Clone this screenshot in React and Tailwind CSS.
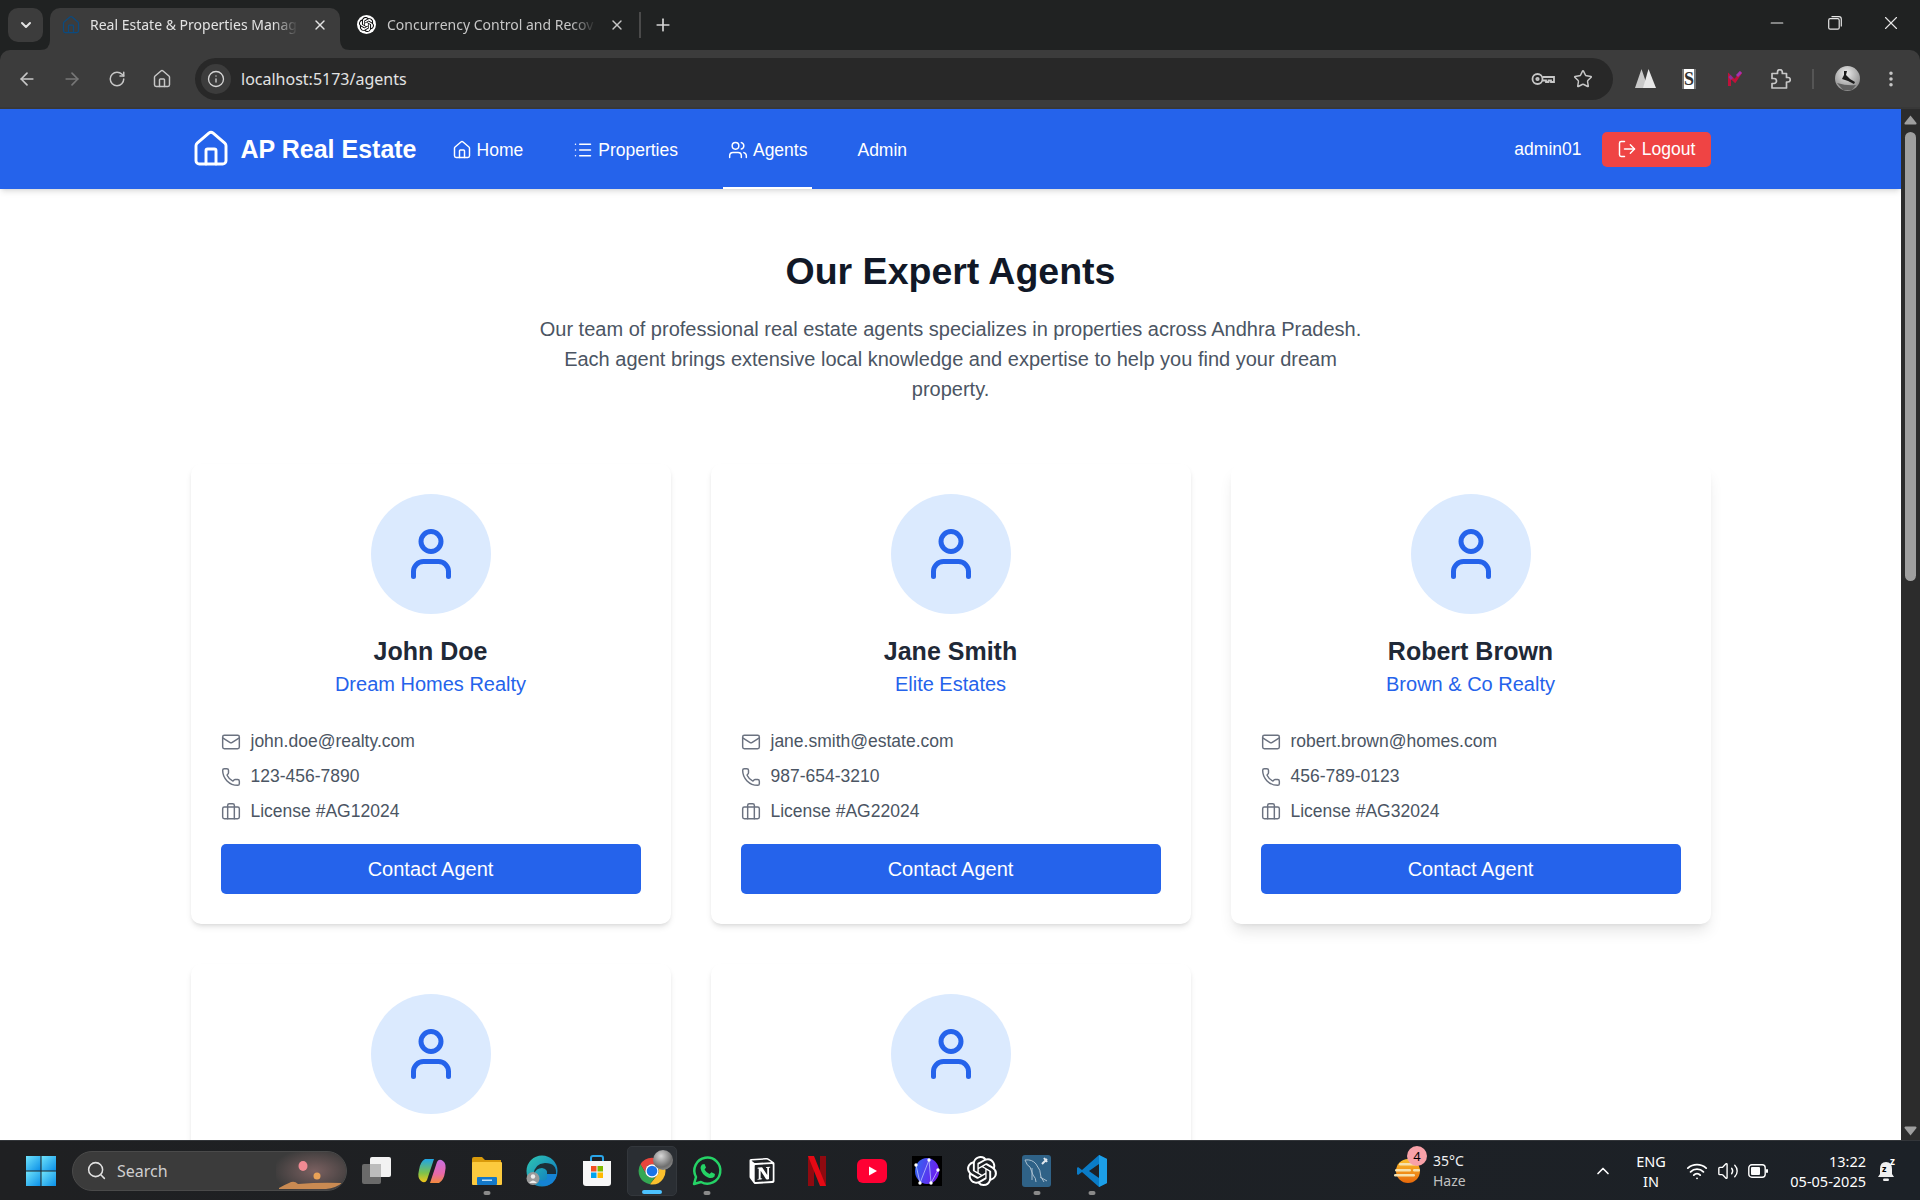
import React from "react";
import {
  House, List, Users, LogOut, User, Mail, Phone, Briefcase, ArrowLeft, ArrowRight, RotateCw, Info, Star,
  EllipsisVertical, Minus, X, Plus, ChevronDown, ChevronUp, Search, Wifi, Volume2,
} from "lucide-react";
import { SiNotion, SiOpenai } from "react-icons/si";

const agents = [
  { name: "John Doe", agency: "Dream Homes Realty", email: "john.doe@realty.com", phone: "123-456-7890", license: "License #AG12024", shadow: "shadow-md" },
  { name: "Jane Smith", agency: "Elite Estates", email: "jane.smith@estate.com", phone: "987-654-3210", license: "License #AG22024", shadow: "shadow-md" },
  { name: "Robert Brown", agency: "Brown & Co Realty", email: "robert.brown@homes.com", phone: "456-789-0123", license: "License #AG32024", shadow: "shadow-lg" },
];

function Avatar() {
  return (
    <div className="w-[120px] h-[120px] rounded-full bg-[#dbeafe] flex items-center justify-center mx-auto shrink-0">
      <User size={60} strokeWidth={2} className="text-[#2563eb]" />
    </div>
  );
}

function Row({ icon: Icon, children }) {
  return (
    <div className="flex items-center h-[25px] gap-[10px] text-[17.5px] text-[#4b5563]">
      <Icon size={20} strokeWidth={1.75} className="text-[#6b7280] shrink-0" />
      <span>{children}</span>
    </div>
  );
}

function AgentCard({ a }) {
  return (
    <div className={`bg-white rounded-[10px] p-[30px] ${a.shadow}`}>
      <Avatar />
      <div className="mt-[22px] text-center text-[25px] leading-[30px] font-bold text-[#1f2937]">{a.name}</div>
      <div className="mt-[3px] text-center text-[20px] leading-[30px] text-[#2563eb]">{a.agency}</div>
      <div className="mt-[30px] flex flex-col gap-[10px]">
        <Row icon={Mail}>{a.email}</Row>
        <Row icon={Phone}>{a.phone}</Row>
        <Row icon={Briefcase}>{a.license}</Row>
      </div>
      <button className="mt-[20px] w-full h-[50px] rounded-[5px] bg-[#2563eb] text-white text-[20px]">Contact Agent</button>
    </div>
  );
}

function PartialCard() {
  return (
    <div className="bg-white rounded-[10px] p-[30px] shadow-md h-[460px]">
      <Avatar />
    </div>
  );
}

function NavItem({ icon: Icon, children, active }) {
  return (
    <a className={`h-full flex items-center gap-[5px] px-[5px] pt-[4px] text-[17.5px] text-white border-b-2 ${active ? "border-white" : "border-transparent"}`}>
      {Icon && <Icon size={20} strokeWidth={1.75} />}
      <span>{children}</span>
    </a>
  );
}

function Navbar() {
  return (
    <nav className="relative z-10 h-[80px] bg-[#2563eb] shadow-md shrink-0">
      <div className="w-[1520px] mx-auto h-full flex items-center text-white">
        <div className="flex items-center gap-[10px]">
          <House size={40} strokeWidth={1.75} />
          <span className="pt-[2px] text-[25px] font-bold">AP Real Estate</span>
        </div>
        <div className="ml-[30px] h-full flex items-center gap-[40px]">
          <NavItem icon={House}>Home</NavItem>
          <NavItem icon={List}>Properties</NavItem>
          <NavItem icon={Users} active>Agents</NavItem>
          <NavItem>Admin</NavItem>
        </div>
        <span className="ml-auto text-[17.5px]">admin01</span>
        <button className="ml-[20px] h-[35px] w-[109px] flex items-center justify-center gap-[5px] rounded-[5px] bg-[#ef4444] text-[17.5px] text-white">
          <LogOut size={20} strokeWidth={1.75} />
          <span>Logout</span>
        </button>
      </div>
    </nav>
  );
}

function Scrollbar() {
  return (
    <div className="w-[19px] shrink-0 bg-[#2c2c2c] flex flex-col items-center pt-[6px] pb-[4px]">
      <svg width="13" height="10" viewBox="0 0 13 10"><path d="M6.5 0.5 L12.5 8 Q12.8 9.5 11.5 9.5 H1.5 Q0.2 9.5 0.5 8 Z" fill="#9f9f9f" /></svg>
      <div className="mt-[7px] w-[11px] h-[449px] rounded-full bg-[#9f9f9f]" />
      <svg className="mt-auto" width="13" height="10" viewBox="0 0 13 10"><path d="M6.5 9.5 L12.5 2 Q12.8 0.5 11.5 0.5 H1.5 Q0.2 0.5 0.5 2 Z" fill="#9f9f9f" /></svg>
    </div>
  );
}

function Flare({ side }) {
  const d = side === "l" ? "M10 0 V10 H0 Q10 10 10 0 Z" : "M0 0 V10 H10 Q0 10 0 0 Z";
  return (
    <svg width="10" height="10" viewBox="0 0 10 10" className={`absolute bottom-0 ${side === "l" ? "left-[-10px]" : "right-[-10px]"}`}>
      <path d={d} fill="#3c3c3c" />
    </svg>
  );
}

function TabStrip() {
  return (
    <div className="h-[50px] shrink-0 bg-[#202222] flex items-end font-['Noto_Sans',sans-serif] text-[14px]">
      <div className="ml-[8px] mb-[8px] w-[35px] h-[34px] rounded-[10px] bg-[#3c3c3c] flex items-center justify-center text-[#e3e3e3]">
        <ChevronDown size={16} strokeWidth={3} />
      </div>
      <div className="relative ml-[7px] w-[290px] h-[42px] rounded-t-[10px] bg-[#3c3c3c] flex items-center pl-[11px] pr-[12px] pb-[9px] text-[#e3e3e3]">
        <Flare side="l" />
        <Flare side="r" />
        <House size={20} strokeWidth={1.5} className="text-[#0c4a7e] shrink-0" />
        <span className="ml-[9px] w-[208px] whitespace-nowrap [mask-image:linear-gradient(to_right,black_88%,transparent)]">Real Estate &amp; Properties Manag</span>
        <X size={16} strokeWidth={2} className="ml-auto text-[#e3e3e3]" />
      </div>
      <div className="ml-[17px] w-[280px] h-[42px] flex items-center pb-[9px] text-[#c7c7c7]">
        <div className="w-[19px] h-[19px] rounded-full bg-white flex items-center justify-center shrink-0">
          <SiOpenai size={15} className="text-black" />
        </div>
        <span className="ml-[11px] w-[209px] whitespace-nowrap [mask-image:linear-gradient(to_right,black_88%,transparent)]">Concurrency Control and Recov</span>
        <X size={16} strokeWidth={2} className="ml-[13px] text-[#c7c7c7]" />
      </div>
      <div className="mb-[12px] w-[2px] h-[26px] bg-[#4a4a4a] ml-[2px]" />
      <Plus size={20} strokeWidth={2} className="ml-[12px] mb-[15px] text-[#d5d5d5]" />
      <div className="ml-auto flex items-center mb-[16px] text-[#e6e6e6]">
        <Minus size={20} strokeWidth={1.25} />
        <svg className="ml-[41px]" width="14" height="14" viewBox="0 0 14 14" fill="none" stroke="currentColor" strokeWidth="1.2">
          <rect x="0.7" y="2.7" width="10.5" height="10.5" rx="1.5" />
          <path d="M3.5 0.7 H11 Q13.3 0.7 13.3 3 V10.5" />
        </svg>
        <X size={22} strokeWidth={1.25} className="ml-[38px] mr-[18px]" />
      </div>
    </div>
  );
}

function Toolbar() {
  return (
    <div className="h-[59px] shrink-0 bg-[#202222]">
      <div className="h-full rounded-t-[10px] bg-[#3c3c3c] border-b-2 border-[#383838] flex items-center font-['Noto_Sans',sans-serif]">
        <ArrowLeft size={20} strokeWidth={2} className="ml-[17px] text-[#c7c7c7]" />
        <ArrowRight size={20} strokeWidth={2} className="ml-[25px] text-[#777]" />
        <RotateCw size={18} strokeWidth={2} className="ml-[26px] text-[#c7c7c7]" />
        <House size={20} strokeWidth={1.75} className="ml-[26px] text-[#c7c7c7]" />
        <div className="ml-[23px] w-[1418px] h-[42px] rounded-full bg-[#282828] flex items-center pl-[6px] pr-[20px]">
          <div className="w-[30px] h-[30px] rounded-full bg-[#3c3c3c] flex items-center justify-center">
            <Info size={18} strokeWidth={1.75} className="text-[#d5d5d5]" />
          </div>
          <span className="ml-[10px] text-[16px] text-[#e3e3e3]">localhost:5173/agents</span>
          <svg className="ml-auto" width="24" height="14" viewBox="0 0 24 14" fill="none" stroke="#c7c7c7" strokeWidth="1.8">
            <circle cx="6.5" cy="7" r="5" />
            <circle cx="6.5" cy="7" r="1.2" />
            <path d="M11.5 5 H23 V10 H20 V8.5 H17.5 V10 H15 V8.5 H11.5" />
          </svg>
          <Star size={20} strokeWidth={1.75} className="ml-[18px] text-[#c7c7c7]" />
        </div>
        <svg className="ml-[22px]" width="21" height="19" viewBox="0 0 21 19">
          <path d="M6.5 0 L13 19 H0 Z" fill="#c9c9c9" />
          <path d="M13.5 0 L21 19 H8 Z" fill="#e8e8e8" />
        </svg>
        <div className="ml-[26px] w-[14px] h-[20px] bg-white border-x-[2px] border-[#777] flex items-center justify-center text-[18px] leading-none font-bold font-['Liberation_Serif',serif] text-[#333]">S</div>
        <svg className="ml-[32px]" width="14" height="16" viewBox="0 0 14 16" fill="none" strokeWidth="3">
          <path d="M1.5 15 V5 L7 10 L13 1" stroke="#c0113a" />
          <path d="M9 5 L13 1" stroke="#a133b3" />
          <path d="M1.5 5 L4 8" stroke="#8b2f9e" />
        </svg>
        <svg className="ml-[29px]" width="20" height="20" viewBox="0 0 20 20" fill="none" stroke="#c7c7c7" strokeWidth="1.7" strokeLinejoin="round">
          <path d="M1 4.5 H6.5 V3 A2.4 2.4 0 0 1 11.3 3 V4.5 H15.5 V8.5 H17 A2.2 2.2 0 0 1 17 13 H15.5 V19 H1 V14.5 H3 A2.5 2.5 0 0 0 3 9.5 H1 Z" />
        </svg>
        <div className="ml-[21px] w-[2px] h-[20px] bg-[#555]" />
        <svg className="ml-[21px]" width="25" height="25" viewBox="0 0 25 25">
          <defs>
            <radialGradient id="pf" cx="0.45" cy="0.3" r="0.8"><stop offset="0" stopColor="#ececec" /><stop offset="0.6" stopColor="#a8a8a8" /><stop offset="1" stopColor="#7a7a7a" /></radialGradient>
          </defs>
          <circle cx="12.5" cy="12.5" r="12.5" fill="url(#pf)" />
          <path d="M9 5 L12 5 L11 9 L15 13 L20 16 L19 18 L13 15 L7 13 L9 9 Z" fill="#1a1a1a" />
          <path d="M2 17 Q12 20 21 19 L17 24 H8 Z" fill="#5f5f5f" />
        </svg>
        <EllipsisVertical size={20} strokeWidth={2.25} className="ml-[21px] text-[#c7c7c7]" />
      </div>
    </div>
  );
}

function Chrome() {
  return (
    <svg width="32" height="32" viewBox="0 0 48 48">
      <path d="M24 4 A20 20 0 0 1 41.3 14 L24 14 A10 10 0 0 0 15.2 29 L6.7 14 A20 20 0 0 1 24 4 Z" fill="#e8453c" />
      <path d="M6.7 14 L15.3 29 A10 10 0 0 0 29 32.7 L21 44 A20 20 0 0 1 6.7 14 Z" fill="#34a853" />
      <path d="M41.3 14 A20 20 0 0 1 21 44 L32.7 29 A10 10 0 0 0 24 14 Z" fill="#fbc02d" />
      <circle cx="24" cy="24" r="10" fill="#fff" />
      <circle cx="24" cy="24" r="8" fill="#1a73e8" />
    </svg>
  );
}

function TaskIcon({ children, dot, active }) {
  return (
    <div className="w-[55px] h-[50px] flex justify-center">
      <div className={`relative w-[50px] h-[50px] flex items-center justify-center rounded-[5px] ${active ? "bg-[#2a2e33] border border-[#33373c]" : ""}`}>
        {children}
        {dot && <span className={`absolute bottom-[1px] left-1/2 -translate-x-1/2 h-[4px] rounded-full ${active ? "w-[20px] bg-[#4cc2ff]" : "w-[7px] bg-[#8a8a8a]"}`} />}
      </div>
    </div>
  );
}

function Taskbar() {
  return (
    <div className="h-[60px] shrink-0 border-t border-[#33363a] bg-linear-to-r from-[#1f2022] to-[#1c2127] flex items-center font-['Noto_Sans',sans-serif] text-white">
      <svg className="ml-[26px] shrink-0" width="30" height="30" viewBox="0 0 30 30">
        <defs>
          <linearGradient id="win" x1="0" y1="0" x2="1" y2="1">
            <stop offset="0" stopColor="#6fe3fb" />
            <stop offset="1" stopColor="#0a8fe8" />
          </linearGradient>
        </defs>
        <rect x="0" y="0" width="14.5" height="14.5" fill="url(#win)" />
        <rect x="15.5" y="0" width="14.5" height="14.5" fill="url(#win)" />
        <rect x="0" y="15.5" width="14.5" height="14.5" fill="url(#win)" />
        <rect x="15.5" y="15.5" width="14.5" height="14.5" fill="url(#win)" />
      </svg>
      <div className="ml-[16px] w-[275px] h-[40px] shrink-0 rounded-full bg-[#3b3b3b] border border-[#4a4a4a] flex items-center pl-[13px] overflow-hidden">
        <Search size={21} strokeWidth={1.75} className="text-[#e0e0e0]" />
        <span className="ml-[10px] text-[16px] text-[#cfcfcf]">Search</span>
        <svg className="ml-auto" width="70" height="38" viewBox="0 0 70 38">
          <defs>
            <radialGradient id="haze" cx="0.55" cy="0.5" r="0.6"><stop offset="0" stopColor="#7a6060" /><stop offset="1" stopColor="#3b3b3b" /></radialGradient>
          </defs>
          <rect width="70" height="38" fill="url(#haze)" />
          <ellipse cx="27" cy="14" rx="4.5" ry="5" fill="#f08a93" />
          <ellipse cx="41" cy="24" rx="3.5" ry="3.5" fill="#e9a257" />
          <path d="M3 36 Q8 33 13 31 Q18 28 22 32 Q45 30 66 31 Q60 36 50 37 H3 Z" fill="#c98a52" />
        </svg>
      </div>
      <div className="ml-[2px] flex items-center shrink-0">
        <TaskIcon>
          <svg width="30" height="30" viewBox="0 0 30 30">
            <rect x="0" y="8" width="19" height="20" rx="2" fill="#6a6a6a" />
            <rect x="8" y="1" width="21" height="20" rx="2" fill="#f2f2f2" />
            <rect x="8" y="8" width="11" height="13" fill="#bcbcbc" />
          </svg>
        </TaskIcon>
        <TaskIcon>
          <svg width="30" height="30" viewBox="0 0 30 30">
            <defs>
              <linearGradient id="cp1" x1="0" y1="0" x2="0" y2="1"><stop offset="0" stopColor="#1fa6e8" /><stop offset="0.6" stopColor="#7ec24a" /><stop offset="1" stopColor="#f5c518" /></linearGradient>
              <linearGradient id="cp2" x1="0" y1="0" x2="0" y2="1"><stop offset="0" stopColor="#c86fe0" /><stop offset="0.6" stopColor="#e868a8" /><stop offset="1" stopColor="#f28a3c" /></linearGradient>
            </defs>
            <path d="M8 3 H17 L10 24 Q8 28 4 25 Q0 22 2 14 Q3 6 8 3 Z" fill="url(#cp1)" />
            <path d="M22 27 H13 L20 6 Q22 2 26 5 Q30 8 28 16 Q27 24 22 27 Z" fill="url(#cp2)" />
          </svg>
        </TaskIcon>
        <TaskIcon dot>
          <svg width="30" height="30" viewBox="0 0 30 30">
            <path d="M0 3 Q0 1 2 1 H10 L13 4 H29 V12 H0 Z" fill="#d99a0b" />
            <rect x="0" y="6" width="30" height="23" rx="1" fill="#fcca3e" />
            <rect x="5" y="21" width="20" height="8" rx="1" fill="#1478c8" />
            <rect x="10" y="23.5" width="10" height="1.5" fill="#bfe0f7" />
          </svg>
        </TaskIcon>
        <TaskIcon>
          <svg width="32" height="32" viewBox="0 0 32 32">
            <defs>
              <linearGradient id="edge" x1="0" y1="0" x2="1" y2="1"><stop offset="0" stopColor="#2fc6b0" /><stop offset="1" stopColor="#0b6fc4" /></linearGradient>
            </defs>
            <circle cx="16" cy="16" r="15.5" fill="url(#edge)" />
            <path d="M30 19 Q31 8 19 8 Q8 9 8 19 Q10 13 16 13 Q22 14 21 19 Z" fill="#1d2228" opacity="0.9" />
            <path d="M21 19 H31 Q29 30 18 31 Q13 30 12 24 Q17 27 21 24 Z" fill="#1583d4" />
            <circle cx="7" cy="23.5" r="6.5" fill="#9a9a9a" />
            <circle cx="7" cy="21.5" r="2.2" fill="#eeeeee" />
            <path d="M3 28 Q7 23 11 28 Z" fill="#eeeeee" />
          </svg>
        </TaskIcon>
        <TaskIcon>
          <svg width="30" height="32" viewBox="0 0 30 32">
            <path d="M9 7 V3 Q9 1 11 1 H19 Q21 1 21 3 V7" fill="none" stroke="#2aa5e8" strokeWidth="2" />
            <path d="M1 6 H29 V28 Q29 31 26 31 H4 Q1 31 1 28 Z" fill="#f7f7f7" />
            <rect x="9" y="11" width="5.5" height="5.5" fill="#f25022" />
            <rect x="15.5" y="11" width="5.5" height="5.5" fill="#7fba00" />
            <rect x="9" y="17.5" width="5.5" height="5.5" fill="#00a4ef" />
            <rect x="15.5" y="17.5" width="5.5" height="5.5" fill="#ffb900" />
          </svg>
        </TaskIcon>
        <TaskIcon dot active>
          <Chrome />
          <span className="absolute top-[3px] right-[3px] w-[20px] h-[20px] rounded-full bg-[radial-gradient(circle_at_40%_30%,#d8d8d8,#6e6e6e_60%,#a8a8a8)]" />
        </TaskIcon>
        <TaskIcon dot>
          <svg width="32" height="32" viewBox="0 0 32 32" fill="none">
            <path d="M3 29 L5 22 A13 13 0 1 1 10 27 Z" stroke="#25d366" strokeWidth="2.5" strokeLinejoin="round" />
            <path d="M11 9.5 L13.5 9 L15 12.5 L13.5 14.5 Q15.5 18 18.5 19 L20.5 17.3 L24 19 L23.5 21.5 Q21 24 17 22.5 Q10.5 19.5 9.5 13 Q9.5 11 11 9.5 Z" fill="#25d366" />
          </svg>
        </TaskIcon>
        <TaskIcon><SiNotion size={26} className="text-white" /></TaskIcon>
        <TaskIcon>
          <svg width="18" height="30" viewBox="0 0 18 30">
            <rect x="0" y="0" width="6" height="30" fill="#8f0a10" />
            <rect x="12" y="0" width="6" height="30" fill="#8f0a10" />
            <path d="M0 0 H6 L18 30 H12 Z" fill="#e50914" />
          </svg>
        </TaskIcon>
        <TaskIcon>
          <svg width="30" height="24" viewBox="0 0 30 24">
            <rect x="0" y="0" width="30" height="24" rx="6" fill="#ff0033" />
            <path d="M12 7.5 L20 12 L12 16.5 Z" fill="#fff" />
          </svg>
        </TaskIcon>
        <TaskIcon>
          <svg width="30" height="30" viewBox="0 0 30 30">
            <defs>
              <linearGradient id="obs" x1="0" y1="0" x2="1" y2="0.3"><stop offset="0" stopColor="#2f6bf0" /><stop offset="1" stopColor="#6a1ff0" /></linearGradient>
            </defs>
            <rect width="30" height="30" fill="#000" />
            <ellipse cx="15" cy="15" rx="12" ry="13" fill="url(#obs)" />
            <path d="M4 9 L8 27 L17 4 L19 27 L26 14" fill="none" stroke="#c8d4ff" strokeWidth="0.7" />
            {[[4, 9], [17, 4], [26, 14], [19, 27], [8, 27]].map(([x, y]) => (
              <circle key={x} cx={x} cy={y} r="1.7" fill="#fff" />
            ))}
          </svg>
        </TaskIcon>
        <TaskIcon><SiOpenai size={30} className="text-white" /></TaskIcon>
        <TaskIcon dot>
          <svg width="29" height="32" viewBox="0 0 29 32" fill="none">
            <rect width="29" height="32" rx="3" fill="#2f6287" />
            <path d="M3 5 Q10 4 14 9 Q19 15 19 22 L22 27 M3 5 Q5 11 8 12 L11 20 M11 20 Q14 23 14 27 M10 13 L10 25" stroke="#a9bfcf" strokeWidth="1" />
            <path d="M20 9 L25 4 M22 3 L25 7" stroke="#e2e8ee" strokeWidth="2" />
            <path d="M18 22 L25 26" stroke="#a9bfcf" strokeWidth="1" />
          </svg>
        </TaskIcon>
        <TaskIcon dot>
          <svg width="30" height="32" viewBox="0 0 30 32">
            <path d="M22 0 L30 4 V28 L22 32 L5 17 L1 20 L0 19 V13 L1 12 L5 15 Z" fill="#0a7cc7" />
            <path d="M22 0 L30 4 V28 L22 32 Z" fill="#1c9fe8" />
            <path d="M22 9 V23 L12 16 Z" fill="#1c2127" />
          </svg>
        </TaskIcon>
      </div>

      <div className="ml-auto relative w-[27px] h-[24px] shrink-0">
        <svg width="27" height="24" viewBox="0 0 27 24">
          <defs>
            <linearGradient id="sun" x1="0" y1="0" x2="0" y2="1"><stop offset="0" stopColor="#fbc02d" /><stop offset="1" stopColor="#e8690b" /></linearGradient>
          </defs>
          <circle cx="14" cy="12" r="12" fill="url(#sun)" />
          <rect x="5" y="4" width="17" height="2.5" rx="1.2" fill="#f6e1ad" />
          <rect x="1" y="10" width="16" height="2.5" rx="1.2" fill="#f6e1ad" />
          <rect x="19" y="10" width="7" height="2.5" rx="1.2" fill="#f6e1ad" />
          <rect x="0" y="15" width="21" height="2.5" rx="1.2" fill="#f6e1ad" />
        </svg>
        <span className="absolute top-[-13px] left-[13px] w-[20px] h-[20px] rounded-full bg-[#f8a1a8] text-black text-[13px] leading-[20px] text-center">4</span>
      </div>
      <div className="ml-[12px] w-[40px] text-[14px] leading-[20px] shrink-0">
        <div className="text-[#f0f0f0]">35°C</div>
        <div className="text-[#c0c0c0]">Haze</div>
      </div>
      <ChevronUp size={20} strokeWidth={2} className="ml-[120px] shrink-0" />
      <div className="ml-[23px] w-[30px] text-center text-[14.5px] leading-[20px] shrink-0 flex flex-col items-center">
        <div>ENG</div>
        <div>IN</div>
      </div>
      <Wifi size={22} strokeWidth={2} className="ml-[20px] shrink-0" />
      <Volume2 size={22} strokeWidth={1.5} className="ml-[9px] shrink-0" />
      <svg className="ml-[9px] shrink-0" width="20" height="14" viewBox="0 0 20 14" fill="none">
        <rect x="0.8" y="0.8" width="16.4" height="12.4" rx="3" stroke="#fff" strokeWidth="1.4" />
        <rect x="3" y="3" width="9" height="8" rx="1" fill="#fff" />
        <rect x="18" y="5" width="2" height="4" rx="1" fill="#fff" />
      </svg>
      <div className="ml-[13px] w-[85px] text-right text-[14.5px] leading-[20px] shrink-0 whitespace-nowrap">
        <div>13:22</div>
        <div>05-05-2025</div>
      </div>
      <div className="relative ml-[11px] mr-[25px] w-[18px] h-[22px] shrink-0">
        <svg width="18" height="22" viewBox="0 0 18 22">
          <path d="M9 2 Q15 2 15 9 V14 L17 17 H1 L3 14 V9 Q3 2 9 2 Z" fill="#f0f0f0" />
          <rect x="6" y="18.5" width="6" height="2.5" rx="1.2" fill="#f0f0f0" />
        </svg>
        <span className="absolute top-[4px] left-[5px] text-[9px] leading-none font-bold text-black">z</span>
        <span className="absolute top-[-4px] left-[13px] text-[10px] leading-none font-bold text-white">z</span>
      </div>
    </div>
  );
}

export default function App() {
  return (
    <div className="w-[1920px] h-[1200px] flex flex-col overflow-hidden bg-white font-['Liberation_Sans',Arial,sans-serif]">
      <TabStrip />
      <Toolbar />
      <div className="flex-1 min-h-0 flex">
        <div className="flex-1 min-w-0 overflow-hidden flex flex-col">
          <Navbar />
          <main className="w-[1520px] mx-auto pt-[60px]">
            <h1 className="text-center text-[37.5px] leading-[45px] font-bold text-[#111827]">Our Expert Agents</h1>
            <p className="mt-[20px] mx-auto max-w-[840px] text-center text-[20px] leading-[30px] text-[#4b5563]">
              Our team of professional real estate agents specializes in properties across Andhra Pradesh. Each agent brings extensive local knowledge and expertise to help you find your dream property.
            </p>
            <div className="mt-[60px] grid grid-cols-3 gap-[40px]">
              {agents.map((a) => (
                <AgentCard key={a.name} a={a} />
              ))}
              <PartialCard />
              <PartialCard />
            </div>
          </main>
        </div>
        <Scrollbar />
      </div>
      <Taskbar />
    </div>
  );
}
